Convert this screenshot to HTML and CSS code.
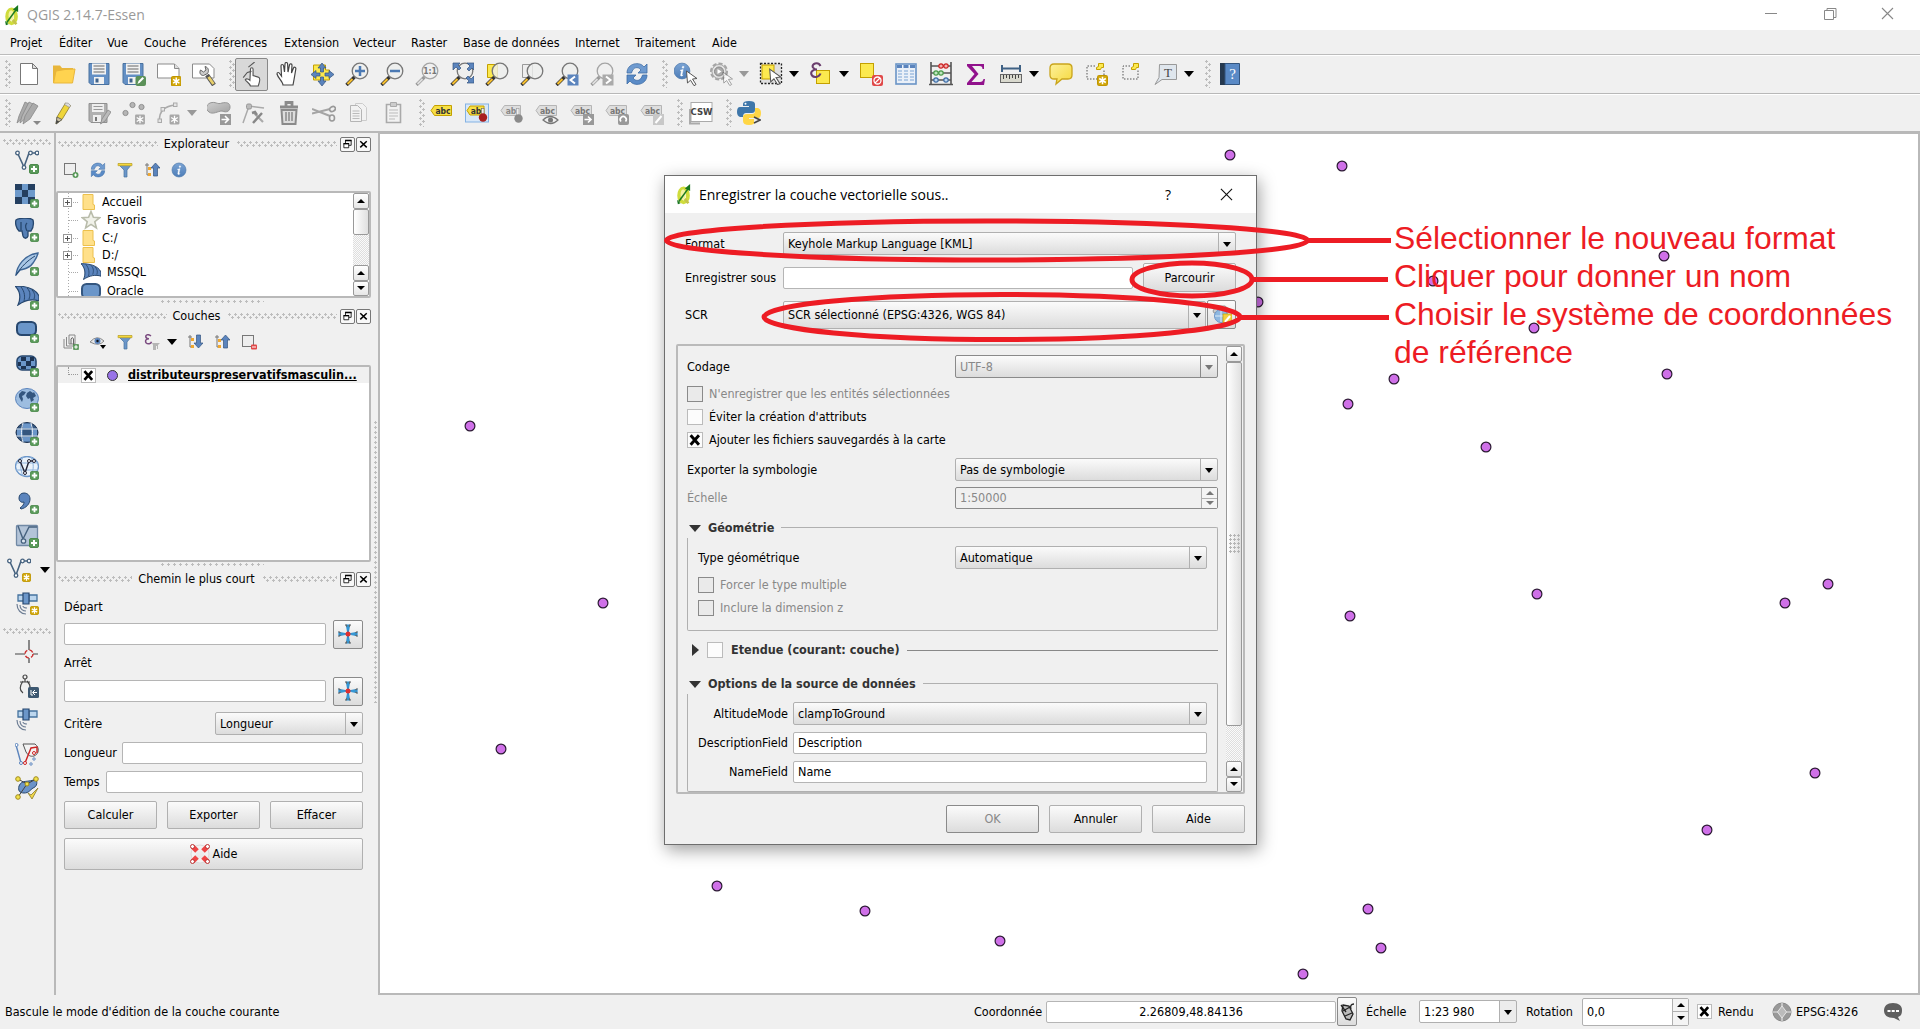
FILE: index.html
```html
<!DOCTYPE html>
<html lang="fr">
<head>
<meta charset="utf-8">
<title>QGIS 2.14.7-Essen</title>
<link rel="stylesheet" href="styles.css">
</head>
<body>
<svg class="defs" aria-hidden="true">
<defs>
<linearGradient id="gBlue" x1="0" y1="0" x2="0" y2="1"><stop offset="0" stop-color="#7ba4d4"/><stop offset="1" stop-color="#4d7db8"/></linearGradient>
<linearGradient id="gYel" x1="0" y1="0" x2="1" y2="1"><stop offset="0" stop-color="#fdf19a"/><stop offset="1" stop-color="#f5d83c"/></linearGradient>
<linearGradient id="gGrey" x1="0" y1="0" x2="1" y2="1"><stop offset="0" stop-color="#cfcfcf"/><stop offset="1" stop-color="#a2a2a2"/></linearGradient>
<symbol id="logo" viewBox="0 0 16 24"><ellipse cx="7.5" cy="13" rx="5" ry="8" fill="none" stroke="#cfdc3c" stroke-width="4.4"/><ellipse cx="7" cy="12" rx="3" ry="6" fill="#f3f2a0"/><path d="M9 17l4 5" stroke="#c5c44a" stroke-width="3"/><path d="M2 20L13 5" stroke="#1c7a22" stroke-width="1.8"/><path d="M9 5l6-5v8z" fill="#17761f"/><path d="M0 18l4 4-3 1z" fill="#17761f"/></symbol>
<symbol id="plus" viewBox="0 0 10 10"><rect x=".5" y=".5" width="9" height="9" rx="1.5" fill="#5a9a5a" stroke="#4c8a4c"/><path d="M5 2v6M2 5h6" stroke="#fff" stroke-width="2"/></symbol>
<symbol id="spark" viewBox="0 0 10 10"><rect x=".5" y=".5" width="9" height="9" rx="1.5" fill="#d3a80c" stroke="#c09600"/><path d="M5 1.5v7M2 3.2l6 3.6M8 3.2L2 6.8" stroke="#fff" stroke-width="1.4"/></symbol>
<symbol id="sparkG" viewBox="0 0 10 10"><rect x=".5" y=".5" width="9" height="9" rx="1" fill="#a8a8a8"/><path d="M5 1.5v7M2 3.2l6 3.6M8 3.2L2 6.8" stroke="#fff" stroke-width="1.2"/></symbol>
<symbol id="lens" viewBox="0 0 24 24"><path d="M1.500 23l8-8" stroke="#333" stroke-width="3.400"/><path d="M2.500 22l5-5" stroke="#f7bf2e" stroke-width="2.200"/><circle cx="15" cy="9" r="7.800" fill="#eeefee" fill-opacity=".8" stroke="#777" stroke-width="1.300"/></symbol>
<symbol id="lensG" viewBox="0 0 24 24"><path d="M1.500 23l8-8" stroke="#999" stroke-width="3.200"/><path d="M2.500 22l5-5" stroke="#ddd" stroke-width="1.800"/><circle cx="15" cy="9" r="7.800" fill="#f0f0f0" stroke="#a5a5a5" stroke-width="1.300"/></symbol>
<symbol id="cursor" viewBox="0 0 12 16"><path d="M1 1l10.500 7.500-4.500.5 3.500 5.500-2 1.200-3.500-5.500L2 13z" fill="#fff" stroke="#555" stroke-width="1"/></symbol>
<symbol id="new" viewBox="0 0 24 24"><path d="M3.500 1.500h12l5 5v16h-17z" fill="#fff" stroke="#777"/><path d="M15.500 1.500v5h5z" fill="#ddd" stroke="#777"/></symbol>
<symbol id="open" viewBox="0 0 24 24"><path d="M1 21V3.500h7l2 2.500h11v4z" fill="#e8b63b"/><path d="M1.500 21L4 9l9-1.500 10-.5-2.500 14z" fill="#ffd34f" stroke="#e8b63b"/></symbol>
<symbol id="save" viewBox="0 0 24 24"><path d="M2 1.500h20v21H4l-2-2z" fill="#6490c5" stroke="#4a729f"/><path d="M5 1.500h14v11H5z" fill="#f2f2f2"/><path d="M6.500 4h11M6.500 7h11M6.500 10h11" stroke="#666" stroke-width="1.200"/><path d="M7 15h10v7H7z" fill="#f2f2f2"/><path d="M8.500 16.500h3v4h-3z" fill="#3f638d"/></symbol>
<symbol id="saveG" viewBox="0 0 24 24"><path d="M2 2.500h18v19H4l-2-2z" fill="#b0b0b0" stroke="#909090"/><path d="M5 3h12v8H5z" fill="#eee"/><path d="M6.500 5.500h9M6.500 8.500h9" stroke="#999"/><path d="M6 14h8v7H6z" fill="#eee"/><path d="M8 16h2v4H8z" fill="#777"/><path d="M13.500 23l1.500-5 6-9 3 2-6 9z" fill="#bbb" stroke="#888" stroke-width=".8"/></symbol>
<symbol id="saveas" viewBox="0 0 24 24"><use href="#save" x="-1" y="0" width="24" height="24"/><rect x="13.500" y="14" width="10.500" height="10" rx="2" fill="#5b9158"/><path d="M15.500 22l1-3 4-4 1.500 1.500-4 4z" fill="#fff"/></symbol>
<symbol id="composer" viewBox="0 0 24 24"><path d="M.5 2h17l4.500 4.500v9.500H.5z" fill="#fff" stroke="#8b8b8b"/><path d="M17.500 2v4.500H22" fill="#ddd" stroke="#8b8b8b"/><use href="#spark" x="14" y="14" width="10.500" height="10.500"/></symbol>
<symbol id="manager" viewBox="0 0 24 24"><path d="M.5 2h17l4.500 4.500v9.500H.5z" fill="#fff" stroke="#8b8b8b"/><path d="M8.500 8l3 2 2.500-2-1-3.500c4 1 4 5 2.500 7l-4 2c-3 0-4.500-2.500-3-5.500z" fill="#ccc" stroke="#555" stroke-width=".9"/><path d="M15 13l7 10" stroke="#555" stroke-width="4.500"/><path d="M16.500 15l5 7" stroke="#e8cf6a" stroke-width="2.800"/></symbol>
<symbol id="touch" viewBox="0 0 24 24"><path d="M11 23c-1-3-4-4-5-6 1-1.500 3.500-.5 4.500.5L11 7c0-2 2.500-2 2.500 0v6l5 1.500c2 .5 1.500 3 1 5L18.500 23z" fill="#fff" stroke="#555" stroke-width="1.100"/><path d="M9 5l6-5M4 15l4-5 4-1" stroke="#555" fill="none" stroke-width="1"/></symbol>
<symbol id="hand" viewBox="0 0 24 24"><path d="M8 23c0-3-5-7-6-11 0-2 2-2 3 0l1.500 2L6 4c0-2 2.400-2 2.600 0L9.500 10 10 2c0-2 2.500-2 2.600 0l.4 8L14.500 3c.3-1.800 2.600-1.300 2.500.3L16.500 11l2-5c.6-1.500 2.700-.8 2.300 1C20 12 19 18 18 23z" fill="#fff" stroke="#444" stroke-width="1.200"/></symbol>
<symbol id="pan" viewBox="0 0 24 24"><path d="M3.500 3h12v5h4v10h-16z" fill="#fce94f" stroke="#c4a000"/><path d="M12 1l4 5h-2.500v4h-3V6H8zM12 24l4-5h-2.500v-4h-3v4H8zM1 12.500l5-4V11h4v3H6v2.500zM24 12.500l-5-4V11h-4v3h4v2.500z" fill="#5b84bd" stroke="#33557f" stroke-width=".7"/></symbol>
<symbol id="zin" viewBox="0 0 24 24"><use href="#lens"/><path d="M15 4v10M10 9h10" stroke="#4b79b3" stroke-width="2.500"/></symbol>
<symbol id="zout" viewBox="0 0 24 24"><use href="#lens"/><path d="M10 9h10" stroke="#4b79b3" stroke-width="2.500"/></symbol>
<symbol id="z11" viewBox="0 0 24 24"><use href="#lensG"/><text x="15" y="12.200" font-size="8.500" font-weight="bold" text-anchor="middle" fill="#777">1:1</text></symbol>
<symbol id="zfull" viewBox="0 0 24 24"><use href="#lens"/><path d="M3 1h7L8 3l3 3-2 2-3-3-3 3zM24 1v7l-2-2-3 3-2-2 3-3-3-3zM24 21h-7l2-2-3-3 2-2 3 3 3-3z" fill="#5b84bd" stroke="#33557f" stroke-width=".7"/></symbol>
<symbol id="zsel" viewBox="0 0 24 24"><path d="M2.500 2.500h10v13h-10z" fill="#fce94f" stroke="#c4a000"/><use href="#lens"/></symbol>
<symbol id="zlay" viewBox="0 0 24 24"><path d="M2.500 2.500h10v13h-10z" fill="#eee" stroke="#999"/><use href="#lens"/></symbol>
<symbol id="zlast" viewBox="0 0 24 24"><use href="#lens"/><rect x="12.500" y="12.500" width="11" height="11" fill="#5b84bd"/><path d="M20 14.500L15.500 18l4.500 3.500" stroke="#fff" stroke-width="2" fill="none"/></symbol>
<symbol id="znext" viewBox="0 0 24 24"><use href="#lensG"/><rect x="12.500" y="12.500" width="11" height="11" fill="#aaa"/><path d="M16 14.500l4.500 3.500-4.500 3.500" stroke="#fff" stroke-width="2" fill="none"/></symbol>
<symbol id="refresh" viewBox="0 0 24 24"><path d="M2 11C2 1 15-1 19 5l3-3v9h-9l3-3C13 4 8 5 6.500 11z" fill="#6f9bd0" stroke="#3d6ca5" stroke-width=".8"/><path d="M22 13c0 10-13 12-17 6l-3 3v-9h9l-3 3c3 4 8 3 9.500-3z" fill="#5a8bc7" stroke="#3d6ca5" stroke-width=".8"/></symbol>
<symbol id="info" viewBox="0 0 24 24"><circle cx="12" cy="12" r="10.500" fill="url(#gBlue)" stroke="#4a77ab"/><path d="M13 5.500l1.800.8-1 2-1.800-.8zM9.500 11l4-1-1.500 7c-.2 1 .5.800 1.500.2-.6 1.600-3.800 2.500-3.300 0l1-5.200z" fill="#fff" stroke="#fff" stroke-width=".6"/></symbol>
<symbol id="identify" viewBox="0 0 24 24"><use href="#info" x="-1" y="0" width="18" height="18"/><use href="#cursor" x="11" y="8" width="13" height="16"/></symbol>
<symbol id="action" viewBox="0 0 24 24"><circle cx="10" cy="9.500" r="7.800" fill="#ddd" stroke="#a5a5a5" stroke-width="2.500" stroke-dasharray="4 2"/><circle cx="10" cy="9.500" r="7" fill="#e4e4e4" stroke="#aaa"/><circle cx="10" cy="9.500" r="4.500" fill="#aaa" stroke="#888"/><path d="M8.500 7v5l4-2.500z" fill="#fff"/><use href="#cursor" x="13" y="9" width="11" height="15" opacity=".55"/></symbol>
<symbol id="select" viewBox="0 0 24 24"><rect x="1.500" y="1.500" width="21" height="20" fill="#e0e0e0" stroke="#222" stroke-width="1.300" stroke-dasharray="2 1.500"/><rect x="3" y="3" width="12" height="14" fill="#fce94f" stroke="#c4a000"/><use href="#cursor" x="9" y="6" width="14" height="17"/></symbol>
<symbol id="eps" viewBox="0 0 24 24"><rect x="7.500" y="8.500" width="13" height="13" fill="#fce94f" stroke="#c4a000"/><path d="M11.500 4C9-1 2 2 4 5.500c1 1.500 3 2 4 2-5 0-7 3-5 6 2 2.500 7 2 8.500-2" fill="none" stroke="#6a3d6d" stroke-width="2.100"/></symbol>
<symbol id="desel" viewBox="0 0 24 24"><rect x="1.500" y="1.500" width="13" height="14" fill="#fce94f" stroke="#c4a000"/><rect x="13" y="13" width="11" height="11" rx="2" fill="#e04848"/><circle cx="18.500" cy="18.500" r="3.500" fill="#e04848" stroke="#fff" stroke-width="1.300"/><path d="M16 21l5-5" stroke="#fff" stroke-width="1.300"/></symbol>
<symbol id="table" viewBox="0 0 24 24"><rect x="2" y="2" width="20" height="20" fill="#eaf0f8" stroke="#6a94c6" stroke-width="1.600"/><path d="M3 4.500h18" stroke="#5b84bd" stroke-width="3" stroke-dasharray="5 1.500"/><path d="M4 9h4m2 0h4m2 0h4M4 12h4m2 0h4m2 0h4M4 15h4m2 0h4m2 0h4M4 18h4m2 0h4m2 0h4" stroke="#7ba4d4"/></symbol>
<symbol id="abacus" viewBox="0 0 24 24"><path d="M2 0v22M22 0v22M2 4h20M2 11h20M2 18h20M0 22.500h24" stroke="#555" stroke-width="1.600"/><g stroke-width="1.200"><circle cx="12" cy="4" r="2.200" fill="#f3b0b0" stroke="#c22"/><circle cx="17" cy="4" r="2.200" fill="#f3b0b0" stroke="#c22"/><circle cx="7" cy="11" r="2.200" fill="#bfe6bf" stroke="#4a9a4a"/><circle cx="12" cy="11" r="2.200" fill="#bfe6bf" stroke="#4a9a4a"/><circle cx="7" cy="18" r="2.200" fill="#bcd6f0" stroke="#3d6ca5"/><circle cx="17" cy="18" r="2.200" fill="#bcd6f0" stroke="#3d6ca5"/></g></symbol>
<symbol id="sigma" viewBox="0 0 24 24"><path d="M3 2h17v5h-1.500c0-2-1-3-3-3H8l6.500 8L7.500 20H16c2 0 3-1 3.500-3H21l-1 6H3v-2l7.500-9L3 4z" fill="#91128c"/></symbol>
<symbol id="measure" viewBox="0 0 24 24"><path d="M3 3v7M21 3v7M3 6.500h18" stroke="#3f6184" stroke-width="2"/><rect x="1.500" y="12.500" width="21" height="8" fill="#d9d9ce" stroke="#666"/><path d="M4.500 13v4m3-4v3m3-3v4m3-4v3m3-3v4m3-4v3" stroke="#444"/></symbol>
<symbol id="tip" viewBox="0 0 24 24"><path d="M5 2h14q4 0 4 4v7q0 4-4 4h-6l-6 5 1-5H5q-4 0-4-4V6q0-4 4-4z" fill="url(#gYel)" stroke="#c9a41c" stroke-width="1.300"/></symbol>
<symbol id="bmnew" viewBox="0 0 24 24"><path d="M11 4H3v13h17V8" fill="none" stroke="#555" stroke-dasharray="1.500 1.500"/><path d="M14.500 1.500h5v4h-2l-1 2h-4v-2l2-1z" fill="#fce94f" stroke="#c4a000"/><use href="#spark" x="13" y="13" width="11" height="11"/></symbol>
<symbol id="bm" viewBox="0 0 24 24"><path d="M11 4H4v13h15V8" fill="none" stroke="#555" stroke-dasharray="1.500 1.500"/><path d="M14.500 1.500h5v4h-2l-1 2h-4v-2l2-1z" fill="#fce94f" stroke="#c4a000"/></symbol>
<symbol id="annot" viewBox="0 0 24 24"><path d="M5.500 2.500h17v15H8l-7 5 4-7z" fill="#dfe6ed" stroke="#999"/><text x="14" y="14.500" font-size="13" text-anchor="middle" class="ser" fill="#444">T</text></symbol>
<symbol id="help" viewBox="0 0 24 24"><path d="M2 1h5v22H2z" fill="#26394f"/><path d="M7 1.500h14.500v21H7z" fill="#5a8ac6" stroke="#33557f"/><text x="14.500" y="17" font-size="15" text-anchor="middle" class="ser" fill="#fff">?</text></symbol>
<symbol id="pencils" viewBox="0 0 24 24"><path d="M1 22l2-7L9 1l4 2-6 14z" fill="#aaa" stroke="#888" stroke-width=".8"/><path d="M4 22l2-7L13 1l4 2-7 14z" fill="#b5b5b5" stroke="#888" stroke-width=".8"/><path d="M7 23l2-8L17 2l5 3-8 13z" fill="#aaa" stroke="#888" stroke-width=".8"/></symbol>
<symbol id="pencil" viewBox="0 0 24 24"><path d="M4 23l1-7L13.500 2l5 2.500-8.500 14z" fill="#efd53a" stroke="#8a7a2a" stroke-width=".8"/><path d="M13.500 2q3-1 5 2.500l-1 2-5-3z" fill="#ddd" stroke="#888" stroke-width=".6"/><path d="M4 23l1-7 5 2.500z" fill="#c9c0a5" stroke="#555" stroke-width=".8"/><path d="M4 23l.5-4 2.800 1.500z" fill="#444"/></symbol>
<symbol id="addpt" viewBox="0 0 24 24"><g fill="#b5b5b5" stroke="#909090"><circle cx="10.500" cy="4" r="2.600"/><circle cx="3.500" cy="12" r="2.600"/><circle cx="19.500" cy="6" r="2.600"/></g><use href="#sparkG" x="12" y="13" width="12" height="11"/></symbol>
<symbol id="curve" viewBox="0 0 24 24"><path d="M2.500 20C2 12 5 5 19 4" fill="none" stroke="#aaa" stroke-width="1.600"/><g fill="#e5e5e5" stroke="#aaa"><rect x="1" y="18" width="3.500" height="3.500"/><rect x="4" y="6.500" width="3.500" height="3.500"/><rect x="16.500" y="2" width="3.500" height="3.500"/></g><use href="#sparkG" x="12" y="13" width="11" height="11"/></symbol>
<symbol id="movef" viewBox="0 0 24 24"><path d="M3 2c6-2 7 2 12 0 5-1 8 0 8 4s-3 6-8 4c-4 0-9 4-13 1S-1 4 3 2z" fill="url(#gGrey)" stroke="#949494"/><rect x="13" y="13" width="11" height="11" fill="#999"/><path d="M14.500 18.500h6M18 15l3.500 3.500L18 22" stroke="#fff" stroke-width="1.600" fill="none"/></symbol>
<symbol id="node" viewBox="0 0 24 24"><path d="M1 22L7 5l15 2" stroke="#aaa" fill="none" stroke-width="1.500"/><rect x="4.500" y="3" width="5" height="5" rx="1.500" fill="#bbb" stroke="#999"/><path d="M12 12l9 9" stroke="#aaa" stroke-width="2.200"/><path d="M20 12l-9 10M10 12l3-1 2 3" stroke="#888" stroke-width="2.400" fill="none"/></symbol>
<symbol id="trash" viewBox="0 0 24 24"><path d="M3 6h18M9 4.500V1.500h6v3" stroke="#8b8b8b" stroke-width="2.800" fill="none"/><path d="M4.500 9h15l-1 14h-13z" fill="#ddd" stroke="#8b8b8b" stroke-width="2"/><path d="M9 11v9M12 11v9M15 11v9" stroke="#8b8b8b" stroke-width="1.500"/></symbol>
<symbol id="cut" viewBox="0 0 24 24"><path d="M0 8l18 7M0 12.500L18 8" stroke="#a5a5a5" stroke-width="2"/><g fill="none" stroke="#999" stroke-width="1.600"><ellipse cx="20.500" cy="8" rx="3" ry="2.300" transform="rotate(-30 20.500 8)"/><ellipse cx="20" cy="17" rx="2.500" ry="3"/></g></symbol>
<symbol id="copy" viewBox="0 0 24 24"><path d="M8.500 2.500h7l4 4v13h-11z" fill="#f2f2f2" stroke="#ccc"/><path d="M3.500 4.500h7l4 4v12h-11z" fill="#f2f2f2" stroke="#b5b5b5"/><path d="M5.500 10h7M5.500 12.500h7M5.500 15h7M5.500 17.500h7" stroke="#bbb"/></symbol>
<symbol id="paste" viewBox="0 0 24 24"><path d="M4.500 3.500h14v18h-14z" fill="#f2f2f2" stroke="#aaa" stroke-width="1.600"/><path d="M8.500 1.500h6v4h-6z" fill="#ccc" stroke="#aaa"/><path d="M7 9h9M7 12h9M7 15h9M7 18h6" stroke="#bbb"/></symbol>
<symbol id="abc" viewBox="0 0 24 24"><path d="M1 9.500L4.500 4.500h17v10h-17z" fill="#f7df45" stroke="#c4a000"/><text x="13" y="12.700" font-size="8.500" font-weight="bold" text-anchor="middle" fill="#333">abc</text></symbol>
<symbol id="abcG" viewBox="0 0 24 24"><path d="M1 9.500L4.500 4.500h17v10h-17z" fill="#dedede" stroke="#b5b5b5"/><text x="12.500" y="12.700" font-size="8.500" font-weight="bold" text-anchor="middle" fill="#777">abc</text></symbol>
<symbol id="abcpin" viewBox="0 0 24 24"><rect x=".5" y="3" width="23" height="18" fill="#d9e8f8" stroke="#83b2e4"/><path d="M2 9.500L5 5h14v9H5z" fill="#f7df45" stroke="#c4a000"/><text x="11" y="12.500" font-size="8.500" font-weight="bold" text-anchor="middle" fill="#333">ab</text><rect x="16.500" y="7.500" width="2.500" height="7" fill="#eee" stroke="#666" stroke-width=".6"/><circle cx="18" cy="16.500" r="4.200" fill="#a82020"/></symbol>
<symbol id="abc1" viewBox="0 0 24 24"><path d="M1 9.500L4.500 4.500h16v10h-16z" fill="#dedede" stroke="#b5b5b5"/><text x="11" y="12.700" font-size="8.500" font-weight="bold" text-anchor="middle" fill="#888">ab</text><rect x="16.500" y="7.500" width="2.500" height="7" fill="#eee" stroke="#999" stroke-width=".6"/><circle cx="18.500" cy="17.500" r="4.200" fill="#8a8a8a"/></symbol>
<symbol id="abc2" viewBox="0 0 24 24"><use href="#abcG"/><path d="M8 19q7-7 15 0-7 7-15 0z" fill="#eee" stroke="#777" stroke-width="1.200"/><circle cx="15.500" cy="19" r="2.500" fill="#777"/></symbol>
<symbol id="abc3" viewBox="0 0 24 24"><use href="#abcG"/><rect x="13" y="13" width="11" height="11" fill="#999"/><path d="M14.500 18.500h6M18 15.500l3 3-3 3" stroke="#fff" stroke-width="1.600" fill="none"/></symbol>
<symbol id="abc4" viewBox="0 0 24 24"><use href="#abcG"/><rect x="13" y="13" width="11" height="11" rx="2" fill="#999"/><path d="M16 20.500a3 3 0 1 1 4.500 0" stroke="#fff" stroke-width="1.600" fill="none"/></symbol>
<symbol id="abc5" viewBox="0 0 24 24"><use href="#abcG"/><rect x="13" y="13" width="11" height="11" fill="#c8c8c8"/><path d="M15.500 22l6-7" stroke="#fff" stroke-width="2"/></symbol>
<symbol id="csw" viewBox="0 0 24 24"><path d="M1 8v14.500h10" fill="none" stroke="#aaa" stroke-width="2"/><rect x="2" y="1.500" width="21" height="19" fill="#fff" stroke="#aaa"/><text x="12.500" y="13.500" font-size="9.500" font-weight="bold" text-anchor="middle" fill="#444">CSW</text></symbol>
<symbol id="python" viewBox="0 0 24 24"><path d="M6 3q0-3 6-3t6 3v6q0 3-3 3H9q-3 0-3 4H3q-3-1-3-5 0-5 3-5h9V5H6z" fill="#3f77aa"/><path d="M18 7h3q3 1 3 5 0 5-3 5h-9v1h6v2q0 4-6 4t-6-4v-4q0-3 4-3h5q3 0 3-3z" fill="#ffd645"/><circle cx="8.500" cy="2.700" r="1" fill="#fff"/><path d="M17 16l6 3-6 3" stroke="#444" stroke-width="1.600" fill="#eee"/></symbol>
<symbol id="vec" viewBox="0 0 24 24"><path d="M2.500 3L9 17l5-14h7" fill="none" stroke="#46627f" stroke-width="1.600"/><g fill="#fff" stroke="#46627f" stroke-width="1.300"><circle cx="2.500" cy="3" r="1.800"/><circle cx="9" cy="17.500" r="1.800"/><circle cx="15.500" cy="3" r="1.800"/><circle cx="22" cy="3" r="1.800"/></g></symbol>
<symbol id="l1" viewBox="0 0 24 24"><use href="#vec"/><use href="#plus" x="14" y="14" width="10" height="10"/></symbol>
<symbol id="l2" viewBox="0 0 24 24"><path d="M0 0h20v20H0z" fill="#6e9acb"/><path d="M0 0h7v6H0zM13 0h7v6h-7zM7 6h6v7H7zM0 13h7v7H0zM13 13h7v7h-7z" fill="#243f60"/><use href="#plus" x="15" y="15" width="9" height="9"/></symbol>
<symbol id="l3" viewBox="0 0 24 24"><path d="M1 2c3-2 14-3 17 0 1 4 0 8-2 11h-3v5c-1 3-4 3-5 0l-1-5H4C1 10 0 5 1 2z" fill="#557fb5" stroke="#27476e" stroke-width="1.300"/><path d="M6 4v8M12 5c-3 3-1 5 0 8" stroke="#27476e" fill="none" stroke-width="1.300"/><use href="#plus" x="15" y="15" width="9" height="9"/></symbol>
<symbol id="l4" viewBox="0 0 24 24"><path d="M1 23C2 14 9 3 23 1c-1 5-3 7-5 10-4 6-10 6-13 7z" fill="#a9c7e6" stroke="#3f6797" stroke-width="1.400"/><path d="M1 23C7 14 12 9 20 4" stroke="#27476e" fill="none"/><use href="#plus" x="15" y="15" width="9" height="9"/></symbol>
<symbol id="sail" viewBox="0 0 24 20"><path d="M0 0c10 0 20 2 24 10l0 5c-6-2-14-1-21 4C6 12 5 5 0 0z" fill="#5b84bd" stroke="#27476e" stroke-width="1.200"/><path d="M6 1c4 5 4 10 3 14M12 2c4 4 3 8 2 11M17 4c3 3 3 6 2 9" stroke="#27476e" fill="none"/></symbol>
<symbol id="l5" viewBox="0 0 24 24"><use href="#sail" width="24" height="20"/><use href="#plus" x="15" y="15" width="9" height="9"/></symbol>
<symbol id="l6" viewBox="0 0 24 24"><rect x="2" y="2" width="19" height="13" rx="4.500" fill="#6b96c9" stroke="#27476e" stroke-width="2"/><use href="#plus" x="15" y="14" width="9" height="9"/></symbol>
<symbol id="l7" viewBox="0 0 24 24"><rect x="2" y="2" width="19" height="14" rx="5" fill="#6b96c9" stroke="#27476e" stroke-width="1.600"/><path d="M6 3h5v4H6zM15 3h4v4h-4zM11 7h5v5h-5zM3 8h3v4H3zM6 12h5v3H6zM16 12h4v3h-4z" fill="#1d3352"/><use href="#plus" x="15" y="14" width="9" height="9"/></symbol>
<symbol id="l8" viewBox="0 0 24 24"><ellipse cx="12" cy="10.500" rx="11.500" ry="10" fill="#9dbde0" stroke="#5b84bd"/><path d="M4 6l3-3 4 1-2 3-2 1 1 3-1 3-3-5zM12 5l3-2 3 2 1-1 2 4-3 2 1 2-3 2-1-4-2 1-2-3z" fill="#34567f"/><use href="#plus" x="15" y="15" width="9" height="9"/></symbol>
<symbol id="l9" viewBox="0 0 24 24"><ellipse cx="12" cy="10.500" rx="11" ry="10" fill="#34567f" stroke="#1d3352"/><path d="M8 1.500h8v5H8zM2 7.500h5.500v6H2zM16.500 7.500H22v6h-5.500zM8 14.500h8v5H8z" fill="#6b96c9"/><path d="M1 7h22M1 14h22M8 1c-2 7-2 12 0 19M16 1c2 7 2 12 0 19" stroke="#e5eef8" fill="none"/><use href="#plus" x="15" y="15" width="9" height="9"/></symbol>
<symbol id="l10" viewBox="0 0 24 24"><ellipse cx="12" cy="10.500" rx="11.500" ry="10" fill="#eaf2fa" stroke="#6b96c9" stroke-width="1.300"/><path d="M1 7h22M1 14h22M8 1c-3 7-3 12 0 19M16 1c3 7 3 12 0 19" stroke="#8fb3dc" fill="none"/><path d="M5 5l5 12 4-12h5" fill="none" stroke="#223" stroke-width="1.400"/><g fill="#fff" stroke="#223"><circle cx="5" cy="5" r="1.500"/><circle cx="10" cy="17" r="1.500"/><circle cx="14" cy="5" r="1.500"/><circle cx="19" cy="5" r="1.500"/></g><use href="#plus" x="15" y="15" width="9" height="9"/></symbol>
<symbol id="l11" viewBox="0 0 24 24"><path d="M5 18c3-2 4-4 4-6-3 1-5-1-5-4s2-5 5-5 6 2 6 6c0 5-4 9-9 10z" fill="#5b84bd" stroke="#27476e"/><use href="#plus" x="15" y="15" width="9" height="9"/></symbol>
<symbol id="l12" viewBox="0 0 24 24"><rect x="1.500" y="1.500" width="21" height="20" rx="1" fill="#b3c4d8" stroke="#7189a5" stroke-width="1.300"/><path d="M3 2l5 13 6-12h8" fill="none" stroke="#46627f" stroke-width="1.400"/><circle cx="8.500" cy="17" r="2.200" fill="#dde6f0" stroke="#46627f" stroke-width="1.300"/><use href="#plus" x="14" y="14" width="10" height="10"/></symbol>
<symbol id="l13" viewBox="0 0 24 24"><use href="#vec"/><use href="#spark" x="15" y="15" width="9" height="9"/></symbol>
<symbol id="sat" viewBox="0 0 24 24"><path d="M3 3h6v6H3zM14 3h8v6h-8z" fill="#bcd6ee" stroke="#46739f" stroke-width="1.300"/><path d="M8 1h6v11H8z" fill="#6b96c9" stroke="#27476e" stroke-width="1.200"/><path d="M8 14c0 1 2 2 4 2M5 13c0 4 3 6 6 6M2 12c0 6 4 10 9 10" fill="none" stroke="#6f7f95" stroke-width="1.200"/></symbol>
<symbol id="l14" viewBox="0 0 24 24"><use href="#sat"/><use href="#spark" x="15" y="14" width="9" height="9"/></symbol>
<symbol id="l15" viewBox="0 0 24 24"><path d="M0 14h10M18 14h5M14 0v10M14 18v5" stroke="#444" stroke-width="1.200"/><circle cx="14" cy="14" r="4" fill="none" stroke="#c33" stroke-width="1.500" stroke-dasharray="4 2.300"/></symbol>
<symbol id="l16" viewBox="0 0 24 24"><circle cx="10" cy="3" r="2" fill="none" stroke="#444" stroke-width="1.200"/><path d="M10 5v3M5 8h10M8 7c-4 6-3 10 0 12M12 7c4 4 3 6 3 8" fill="none" stroke="#444" stroke-width="1.200"/><rect x="13" y="13" width="11" height="11" rx="1.500" fill="#3d5871"/><path d="M16 16v5h2m4-2.500h-4M20 16l-2.500 2.500L20 21" stroke="#fff" fill="none"/></symbol>
<symbol id="l18" viewBox="0 0 24 24"><path d="M1 3l5 18" stroke="#5b84bd" stroke-width="1.400"/><path d="M8 2h12c5 4 4 10-1 12-4 1-6-1-8-4z" fill="#f3f3f3" stroke="#555"/><path d="M10 21l6-15 6-1v6" stroke="#c22" stroke-width="1.400" fill="none"/><g fill="#fff"><circle cx="1.500" cy="3" r="1.500" stroke="#5b84bd"/><circle cx="6" cy="21" r="1.500" stroke="#5b84bd"/><circle cx="10" cy="21" r="1.500" stroke="#c22"/><circle cx="19" cy="11" r="1.500" stroke="#c22"/><circle cx="19" cy="17" r="1.200" stroke="#5b84bd"/><circle cx="16" cy="22" r="1.200" stroke="#5b84bd"/></g></symbol>
<symbol id="l19" viewBox="0 0 24 24"><path d="M4 10c3-7 9-3 17-7 2 5 0 8-3 9-3 2-4 5-9 5S3 14 4 10z" fill="#6b93c8" stroke="#27476e"/><path d="M3 3l9 5 9-5M12 8l-9 13" stroke="#444" fill="none"/><g fill="#f2e14c" stroke="#a08a1c"><circle cx="3" cy="3" r="2.300"/><circle cx="21" cy="3" r="2.300"/><circle cx="12" cy="8" r="2"/><circle cx="3" cy="21" r="2.300"/></g><path d="M13 17l3 2 7-7-6 11z" fill="#f2d94c" stroke="#8a7a2a" stroke-width=".8"/></symbol>
<symbol id="dadd" viewBox="0 0 16 16"><rect x="1.500" y="1.500" width="11" height="11" fill="#eee" stroke="#777"/><circle cx="12.500" cy="13" r="3" fill="#5a9a5a"/><path d="M12.500 11.500v3M11 13h3" stroke="#fff"/></symbol>
<symbol id="drem" viewBox="0 0 16 16"><rect x="1.500" y="1.500" width="11" height="11" fill="#eee" stroke="#777"/><rect x="10" y="10.500" width="6" height="5" rx="1" fill="#e04848"/><path d="M11 13h4" stroke="#fff"/></symbol>
<symbol id="filter" viewBox="0 0 16 16"><path d="M1 2h14L10 8v7H7V8z" fill="#6b96c9" stroke="#46739f" stroke-width=".7"/><path d="M1 1.500h14v2.200H1z" fill="#f5d83c" stroke="#b89a1a" stroke-width=".6"/></symbol>
<symbol id="coll" viewBox="0 0 16 16"><path d="M3 1v12h3M1 3h4" stroke="#777" fill="none"/><path d="M4 5h3v3H4zM4 11h3v3H4z" fill="#f0a830"/><path d="M11.500 1l4.500 5h-2.500v8h-4V6H7z" fill="#5b84bd" stroke="#33557f" stroke-width=".7"/></symbol>
<symbol id="expd" viewBox="0 0 16 16"><path d="M3 1v12h3M1 3h4" stroke="#777" fill="none"/><path d="M4 4h3v3H4zM4 11h3v3H4z" fill="#f0a830"/><path d="M11.500 14L16 9h-2.500V1h-4v8H7z" fill="#5b84bd" stroke="#33557f" stroke-width=".7"/></symbol>
<symbol id="group" viewBox="0 0 16 16"><path d="M1 5v9h8M3.500 3v9h9M6 1h6v9H6z" fill="none" stroke="#888"/><path d="M8 10V5q1.500-3 2.500 0v6" stroke="#666" fill="none"/><use href="#plus" x="10" y="10" width="6" height="6"/></symbol>
<symbol id="eye" viewBox="0 0 16 16"><path d="M0 8q7-8 14-1-5 6-14 1z" fill="#e6e6e6" stroke="#888"/><circle cx="7.500" cy="7" r="3" fill="#5b84bd"/><circle cx="7.500" cy="7" r="1.200" fill="#111"/><path d="M10 11h6l-3 4z" fill="#000"/></symbol>
<symbol id="epsf" viewBox="0 0 16 16"><path d="M7 2C4-.5 1 1 2 3.500c.6 1 2 1.200 3 1.200-3 0-4 2-3 4 2 2 5 1 5.500-1" fill="none" stroke="#7b4b80" stroke-width="1.500"/><path d="M8 9h8l-2 2v4h-1v-3h-1v4H9v-5z" fill="#b5b5b5"/></symbol>
<symbol id="folder" viewBox="0 0 14 16"><path d="M1 .5h10v10l1.500.5v4.500H1z" fill="#ffe08a" stroke="#ecc04c"/></symbol>
<symbol id="star" viewBox="0 0 20 20"><path d="M10 1.500l2.400 5.800 6.300.4-4.900 4 1.600 6.200-5.400-3.500-5.400 3.500 1.600-6.200-4.900-4 6.300-.4z" fill="#f1f2ea" stroke="#b9bcab" stroke-width="1.600"/></symbol>
<symbol id="route" viewBox="0 0 20 20"><path d="M10 10L8.500 1h3zM10 10l-1.500 9h3zM10 10L1 8.500v3zM10 10l9-1.500v3z" fill="#3aa0dc" stroke="#2c8fd0" stroke-width="1.200"/><path d="M7.500.5L9 2.500M12.500.5L11 2.500M7.500 19.500L9 17.500M12.500 19.500L11 17.500M.5 7.500l2 1.500M.5 12.500l2-1.500M19.500 7.500l-2 1.500M19.500 12.500l-2-1.500" stroke="#666" stroke-width="1.300"/><circle cx="10" cy="10" r="2.500" fill="#e03030"/></symbol>
<symbol id="buoy" viewBox="0 0 20 20"><circle cx="10" cy="10" r="6.500" fill="none" stroke="#f2f2f2" stroke-width="5"/><circle cx="10" cy="10" r="9" fill="none" stroke="#d5d5d5" stroke-width=".8"/><path d="M2.500 2.500l4.500 4.500M17.500 2.500L13 7M2.500 17.500L7 13M17.500 17.500L13 13" stroke="#ee4545" stroke-width="5"/><g fill="#fff" stroke="#b33"><circle cx="2.500" cy="2.500" r="2"/><circle cx="17.500" cy="2.500" r="2"/><circle cx="2.500" cy="17.500" r="2"/><circle cx="17.500" cy="17.500" r="2"/></g></symbol>
<symbol id="crs" viewBox="0 0 20 20"><path d="M1 6l3-5h9l5 4-2 3H2z" fill="#ccc" stroke="#999"/><circle cx="9" cy="11" r="6.500" fill="#8fb8e0" stroke="#6b96c9"/><path d="M3 11h12M9 5v12" stroke="#dcebf8"/><rect x="11" y="9" width="9" height="9" fill="#f3cf3e" stroke="#c4a000" stroke-width=".7"/><path d="M13 17l5-6" stroke="#fff" stroke-width="2"/></symbol>
<symbol id="globe" viewBox="0 0 20 20"><circle cx="10" cy="10" r="9" fill="#999" stroke="#888"/><path d="M1 10h18M10 1v18" stroke="#e5e5e5" fill="none" stroke-width="1.200"/><path d="M10 4l4.500 6-4.500 6-4.500-6z" fill="#bbb" stroke="#e5e5e5"/></symbol>
<symbol id="bubble" viewBox="0 0 20 20"><path d="M10 1c6 0 9 3 9 7s-1 6-4 7l2 4-6-3C4 16 1 13 1 8.500S4 1 10 1z" fill="#5f5f5f"/><path d="M4.500 8h3v2h-3zM8.700 8h3v2h-3zM13 8h3v2h-3z" fill="#fff"/></symbol>
<symbol id="mouse" viewBox="0 0 16 20"><path d="M4 3l6 1 4 8-3 6-4-1-4-8z" fill="#bbb" stroke="#222" stroke-width="1.300"/><path d="M4 9l7-4M2 3l5 7M6 14l7-3M15 2c-3 0-4 2-3 5" stroke="#222" fill="none" stroke-width="1.300"/></symbol>
<symbol id="float" viewBox="0 0 16 16"><path d="M5.500 3h7v6h-7z" fill="none" stroke="#000"/><path d="M5 3h8" stroke="#000" stroke-width="2"/><path d="M3.500 7h6v5h-6z" fill="#fff" stroke="#000"/><path d="M3 7h7" stroke="#000" stroke-width="1.600"/></symbol>
<symbol id="xs" viewBox="0 0 16 16"><path d="M4 4l8 7.500M12 4l-8 7.500" stroke="#000" stroke-width="1.800"/></symbol>
<symbol id="chk" viewBox="0 0 16 16"><path d="M3 2.500l9.500 11M12.500 2.500l-9.500 11" stroke="#000" stroke-width="3.300"/></symbol>
</defs>
</svg>

<header class="titlebar">
  <svg class="logo"><use href="#logo"/></svg>
  <span class="apptitle">QGIS 2.14.7-Essen</span>
  <svg class="winbtns" viewBox="0 0 150 30"><path d="M15 13.500h12" stroke="#888"/><path d="M74.500 10.500h9v9h-9zM77 10.500v-2h9v9h-2.500" fill="none" stroke="#888"/><path d="M132 8l11 11M143 8l-11 11" stroke="#888" stroke-width="1.100"/></svg>
</header>
<nav class="menubar">
  <span style="width:49px">Projet</span><span style="width:48px">Éditer</span><span style="width:37px">Vue</span><span style="width:57px">Couche</span><span style="width:83px">Préférences</span><span style="width:69px">Extension</span><span style="width:58px">Vecteur</span><span style="width:52px">Raster</span><span style="width:112px">Base de données</span><span style="width:60px">Internet</span><span style="width:77px">Traitement</span><span>Aide</span>
</nav>

<div class="toolbar">
  <i class="grip"></i>
  <svg><use href="#new"/></svg><svg><use href="#open"/></svg><svg><use href="#save"/></svg><svg><use href="#saveas"/></svg><svg><use href="#composer"/></svg><svg><use href="#manager"/></svg>
  <i class="grip g2"></i>
  <svg class="pressed"><use href="#touch"/></svg><svg><use href="#hand"/></svg><svg><use href="#pan"/></svg><svg><use href="#zin"/></svg><svg><use href="#zout"/></svg><svg><use href="#z11"/></svg><svg><use href="#zfull"/></svg><svg><use href="#zsel"/></svg><svg><use href="#zlay"/></svg><svg><use href="#zlast"/></svg><svg><use href="#znext"/></svg><svg><use href="#refresh"/></svg>
  <i class="grip g3"></i>
  <svg><use href="#identify"/></svg><svg><use href="#action"/></svg><b class="arrow dim"></b><svg><use href="#select"/></svg><b class="arrow"></b><svg><use href="#eps"/></svg><b class="arrow"></b><svg><use href="#desel"/></svg><svg><use href="#table"/></svg><svg><use href="#abacus"/></svg><svg><use href="#sigma"/></svg><svg><use href="#measure"/></svg><b class="arrow"></b><svg><use href="#tip"/></svg><svg><use href="#bmnew"/></svg><svg><use href="#bm"/></svg><svg><use href="#annot"/></svg><b class="arrow"></b>
  <i class="grip g4"></i>
  <svg><use href="#help"/></svg>
</div>
<div class="toolbar second">
  <i class="grip"></i>
  <svg class="wide" viewBox="0 0 29 24"><use href="#pencils" width="24" height="24"/><path d="M17 20h8l-4 4z" fill="#888"/></svg><svg><use href="#pencil"/></svg><svg><use href="#saveG"/></svg><svg><use href="#addpt"/></svg><svg><use href="#curve"/></svg><b class="arrow dim"></b><svg><use href="#movef"/></svg><svg><use href="#node"/></svg><svg><use href="#trash"/></svg><svg><use href="#cut"/></svg><svg><use href="#copy"/></svg><svg><use href="#paste"/></svg>
  <i class="grip g2"></i>
  <svg><use href="#abc"/></svg><svg><use href="#abcpin"/></svg><svg><use href="#abc1"/></svg><svg><use href="#abc2"/></svg><svg><use href="#abc3"/></svg><svg><use href="#abc4"/></svg><svg><use href="#abc5"/></svg>
  <i class="grip g5"></i>
  <svg><use href="#csw"/></svg>
  <i class="grip g2"></i>
  <svg><use href="#python"/></svg>
</div>

<main class="workspace">
  <aside class="sidebar">
    <i class="hgrip"></i>
    <svg><use href="#l1"/></svg><svg><use href="#l2"/></svg><svg><use href="#l3"/></svg><svg><use href="#l4"/></svg><svg><use href="#l5"/></svg><svg><use href="#l6"/></svg><svg><use href="#l7"/></svg><svg><use href="#l8"/></svg><svg><use href="#l9"/></svg><svg><use href="#l10"/></svg><svg><use href="#l11"/></svg><svg><use href="#l12"/></svg>
    <div class="witharrow"><svg><use href="#l13"/></svg><b class="arrow"></b></div>
    <svg><use href="#l14"/></svg>
    <i class="hgrip low"></i>
    <svg><use href="#l15"/></svg><svg><use href="#l16"/></svg><svg><use href="#sat"/></svg><svg><use href="#l18"/></svg><svg><use href="#l19"/></svg>
  </aside>

  <section class="docks">
    <div class="docktitle"><i class="hdots"></i><span>Explorateur</span><i class="hdots"></i><svg class="db"><use href="#float"/></svg><svg class="db"><use href="#xs"/></svg></div>
    <div class="docktools"><svg><use href="#dadd"/></svg><svg><use href="#refresh"/></svg><svg><use href="#filter"/></svg><svg><use href="#coll"/></svg><svg><use href="#info"/></svg></div>
    <div class="tree">
      <div class="rows">
        <div class="row"><i class="pm"></i><svg class="fo"><use href="#folder"/></svg>Accueil</div>
        <div class="row"><i class="br"></i><svg class="big"><use href="#star"/></svg>Favoris</div>
        <div class="row"><i class="pm"></i><svg class="fo"><use href="#folder"/></svg>C:/</div>
        <div class="row short"><i class="pm"></i><svg class="fo"><use href="#folder"/></svg>D:/</div>
        <div class="row"><i class="br"></i><svg class="big"><use href="#sail"/></svg>MSSQL</div>
        <div class="row last"><i class="br"></i><svg class="big" viewBox="0 0 20 20"><rect x="1" y="3" width="18" height="14" rx="4.500" fill="#6b96c9" stroke="#34567f" stroke-width="2"/></svg>Oracle</div>
      </div>
      <div class="vscroll"><b class="sb up"></b><b class="thumb"></b><i class="track"></i><b class="sb up"></b><b class="sb down"></b></div>
    </div>
    <i class="split first"></i>
    <div class="docktitle"><i class="hdots"></i><span>Couches</span><i class="hdots"></i><svg class="db"><use href="#float"/></svg><svg class="db"><use href="#xs"/></svg></div>
    <div class="docktools"><svg><use href="#group"/></svg><svg><use href="#eye"/></svg><svg><use href="#filter"/></svg><svg><use href="#epsf"/></svg><b class="arrow"></b><svg><use href="#expd"/></svg><svg><use href="#coll"/></svg><svg><use href="#drem"/></svg></div>
    <div class="layers"><div class="layer"><i class="lb"></i><svg class="cb"><use href="#chk"/></svg><i class="sym"></i><span>distributeurspreservatifsmasculin...</span></div></div>
    <i class="split"></i>
    <div class="docktitle"><i class="hdots"></i><span>Chemin le plus court</span><i class="hdots"></i><svg class="db"><use href="#float"/></svg><svg class="db"><use href="#xs"/></svg></div>
    <div class="route">
      <label>Départ</label>
      <div class="pick"><div class="input"></div><div class="btn dark"><svg><use href="#route"/></svg></div></div>
      <label class="second-label">Arrêt</label>
      <div class="pick p2"><div class="input"></div><div class="btn dark"><svg><use href="#route"/></svg></div></div>
      <div class="line"><span>Critère</span><div class="combo crit">Longueur</div></div>
      <div class="line"><span>Longueur</span><div class="input len"></div></div>
      <div class="line"><span>Temps</span><div class="input dur"></div></div>
      <div class="three"><div class="btn">Calculer</div><div class="btn">Exporter</div><div class="btn">Effacer</div></div>
      <div class="btn aide"><svg><use href="#buoy"/></svg>Aide</div>
    </div>
  </section>
  <i class="vsplit"></i>
  <section class="map">
    <svg class="points" viewBox="380 134 1538 859">
      <g fill="#cf70e8" stroke="#2b1a33" stroke-width="1.200">
      <circle cx="1230" cy="155" r="4.900"/><circle cx="1342" cy="166" r="4.900"/><circle cx="1664" cy="256" r="4.900"/><circle cx="1433" cy="281" r="4.900"/><circle cx="1534" cy="328" r="4.900"/><circle cx="1394" cy="379" r="4.900"/><circle cx="1667" cy="374" r="4.900"/><circle cx="1348" cy="404" r="4.900"/><circle cx="1486" cy="447" r="4.900"/><circle cx="1258" cy="302" r="4.900"/><circle cx="1537" cy="594" r="4.900"/><circle cx="1350" cy="616" r="4.900"/><circle cx="1828" cy="584" r="4.900"/><circle cx="1785" cy="603" r="4.900"/><circle cx="1815" cy="773" r="4.900"/><circle cx="1707" cy="830" r="4.900"/><circle cx="1368" cy="909" r="4.900"/><circle cx="1381" cy="948" r="4.900"/><circle cx="1303" cy="974" r="4.900"/><circle cx="1000" cy="941" r="4.900"/><circle cx="865" cy="911" r="4.900"/><circle cx="717" cy="886" r="4.900"/><circle cx="603" cy="603" r="4.900"/><circle cx="501" cy="749" r="4.900"/><circle cx="470" cy="426" r="4.900"/>
      </g>
    </svg>
  </section>
</main>

<footer class="status">
  <span class="msg">Bascule le mode d'édition de la couche courante</span>
  <span class="s-coord">Coordonnée</span><div class="input coord">2.26809,48.84136</div><div class="btn dark mouse"><svg><use href="#mouse"/></svg></div>
  <span class="s-ech">Échelle</span><div class="combo white ech">1:23 980</div>
  <span class="s-rot">Rotation</span><div class="spin rot"><span>0,0</span><i><b class="u"></b><b class="d"></b></i></div>
  <svg class="cb"><use href="#chk"/></svg><span class="s-ren">Rendu</span>
  <svg class="globe"><use href="#globe"/></svg><span class="s-epsg">EPSG:4326</span><svg class="bub"><use href="#bubble"/></svg>
</footer>

<div class="dialog">
  <div class="dtitle"><svg class="logo"><use href="#logo"/></svg><span>Enregistrer la couche vectorielle sous..</span><em>?</em><svg class="dx" viewBox="0 0 14 14"><path d="M1 1l12 12M13 1L1 13" stroke="#111" stroke-width="1.200"/></svg></div>
  <div class="form">
    <div class="frow"><span>Format</span><div class="combo grow">Keyhole Markup Language [KML]</div></div>
    <div class="frow tall"><span>Enregistrer sous</span><div class="input grow"></div><div class="btn parc">Parcourir</div></div>
    <div class="frow tall"><span>SCR</span><div class="combo grow scr">SCR sélectionné (EPSG:4326, WGS 84)</div><div class="btn dark crsb"><svg><use href="#crs"/></svg></div></div>
  </div>
  <div class="sframe">
    <div class="content">
      <div class="crow"><span>Codage</span><div class="combo w263 off">UTF-8</div></div>
      <div class="check off c1"><i></i>N'enregistrer que les entités sélectionnées</div>
      <div class="check"><i></i>Éviter la création d'attributs</div>
      <div class="check"><i><svg><use href="#chk"/></svg></i>Ajouter les fichiers sauvegardés à la carte</div>
      <div class="crow r2"><span>Exporter la symbologie</span><div class="combo w263">Pas de symbologie</div></div>
      <div class="crow r3"><span class="grey">Échelle</span><div class="spin off w263"><span>1:50000</span><i><b class="u"></b><b class="d"></b></i></div></div>
      <div class="ghead"><b class="tri"></b><strong>Géométrie</strong><i class="edge"></i></div>
      <div class="gbody geo">
        <div class="crow"><span>Type géométrique</span><div class="combo w252">Automatique</div></div>
        <div class="check off c1"><i></i>Forcer le type multiple</div>
        <div class="check off"><i></i>Inclure la dimension z</div>
      </div>
      <div class="extent"><b class="tri right"></b><i class="box"></i><strong>Etendue (courant: couche)</strong><i class="rule"></i></div>
      <div class="ghead opts"><b class="tri"></b><strong>Options de la source de données</strong><i class="edge"></i></div>
      <div class="gbody opt">
        <div class="orow"><span>AltitudeMode</span><div class="combo">clampToGround</div></div>
        <div class="orow"><span>DescriptionField</span><div class="input">Description</div></div>
        <div class="orow"><span>NameField</span><div class="input">Name</div></div>
      </div>
    </div>
    <div class="vscroll large"><b class="sb up"></b><b class="thumb"><i></i></b><i class="track"></i><b class="sb up"></b><b class="sb down"></b></div>
  </div>
  <div class="dbtns"><div class="btn off">OK</div><div class="btn">Annuler</div><div class="btn">Aide</div></div>
</div>

<svg class="notes" viewBox="0 0 1920 1029">
  <g fill="none" stroke="#ed1c24" stroke-width="5">
    <ellipse cx="987" cy="240.500" rx="320.500" ry="19.500"/><path d="M1307 240.500h84"/>
    <ellipse cx="1192" cy="279.500" rx="60" ry="16.500"/><path d="M1252 279.500h136"/>
    <ellipse cx="1002" cy="317" rx="238" ry="22.500"/><path d="M1240 317.500h149"/>
  </g>
  <g class="notetext"><text x="1394" y="249">Sélectionner le nouveau format</text><text x="1394" y="287">Cliquer pour donner un nom</text><text x="1394" y="325">Choisir le système de coordonnées</text><text x="1394" y="363">de référence</text></g>
</svg>
</body>
</html>
```
FILE: styles.css
```css
* { box-sizing: border-box; }
body {
  margin: 0; width: 1920px; height: 1029px; overflow: hidden;
  background: #f0f0f0; color: #000;
  font-family: "DejaVu Sans Condensed", "DejaVu Sans", sans-serif;
  font-stretch: condensed; font-size: 12.5px; line-height: 16px;
  display: flex; flex-direction: column; position: relative; white-space: nowrap;
}
svg { display: block; flex: none; }
i, em { font-style: normal; }
.defs { position: absolute; width: 0; height: 0; }
.ser { font-family: "Liberation Serif", serif; }

.titlebar { height: 30px; background: #fff; display: flex; align-items: center; flex: none; padding-left: 4px; }
.logo { width: 16px; height: 21px; }
.apptitle { font-family: "Open Sans", sans-serif; font-stretch: normal; font-size: 14px; color: #999; margin-left: 7px; flex: 1; }
.winbtns { width: 150px; height: 30px; margin-right: 20px; }

.menubar { height: 25px; flex: none; display: flex; align-items: center; padding: 1px 0 0 10px; border-bottom: 1px solid #bcbcbc; }

.toolbar { height: 39px; flex: none; display: flex; align-items: center; padding: 0 0 1px 5px; border-top: 1px solid #fff; border-bottom: 1px solid #b8b8b8; }
.toolbar.second { height: 39px; border-bottom: 2px solid #b8b8b8; padding-bottom: 0; }
.toolbar svg { width: 24px; height: 24px; margin: 0 5.5px; }
.toolbar svg.pressed { width: 33px; height: 33px; margin: 0 1px; padding: 3px; border: 1px solid #888; border-radius: 2px; background: #d8d8d8; }
.toolbar svg.wide { width: 29px; margin: 0 1px 0 5px; }
.toolbar svg text { font-stretch: condensed; }
.grip { width: 6px; height: 28px; flex: none; background: radial-gradient(circle at 1.5px 1.5px, #bdbdbd 1px, transparent 1.4px) 0 0/6px 6px, radial-gradient(circle at 4.5px 4.5px, #bdbdbd 1px, transparent 1.4px) 0 0/6px 6px; }
.g2 { margin-left: 8px; }
.toolbar .g2 { margin-right: -1px; }
.g3 { margin-left: 8px; }
.g4 { margin-left: 7px; margin-right: 1px; }
.g5 { margin-left: 8px; }
.arrow { width: 15px; height: 6px; flex: none; display: flex; justify-content: center; }
.arrow::before { content: ""; border: 5px solid transparent; border-top: 6px solid #000; border-bottom: 0; margin-right: 3px; }
.arrow.dim::before { border-top-color: #999; }

.workspace { height: 862px; flex: none; display: flex; }
.sidebar { width: 56px; flex: none; border-right: 2px solid #b9b9b9; display: flex; flex-direction: column; align-items: center; padding-top: 6px; }
.sidebar svg { width: 24px; height: 24px; margin: 5px 0; }
.hgrip { width: 48px; height: 6px; flex: none; background: radial-gradient(circle at 1.5px 1.5px, #bdbdbd 1px, transparent 1.4px) 0 0/6px 6px, radial-gradient(circle at 4.5px 4.5px, #bdbdbd 1px, transparent 1.4px) 0 0/6px 6px; }
.hgrip.low { margin: 7px 0 1px; }
.witharrow { display: flex; align-items: center; width: 46px; }
.witharrow svg { margin-left: 3px; }
.witharrow .arrow { margin-left: 8px; }

.docks { width: 315px; flex: none; padding-top: 3px; }
.docktitle { height: 16px; display: flex; align-items: center; }
.docktitle span { padding: 0 6px; }
.hdots { flex: 1; height: 6px; margin-left: 2px; background: radial-gradient(circle at 1.5px 1.5px, #bdbdbd 1px, transparent 1.4px) 0 0/6px 6px, radial-gradient(circle at 4.5px 4.5px, #bdbdbd 1px, transparent 1.4px) 0 0/6px 6px; }
.hdots + svg { margin-left: 3px; }
.db { width: 15px; height: 15px; border: 1px solid #777; border-radius: 2px; background: #f8f8f8; margin-left: 1px; }
.docktools { height: 36px; margin-bottom: 3px; padding-left: 7px; display: flex; align-items: center; gap: 11px; }
.docktools svg { width: 16px; height: 16px; }
.docktools .arrow { margin: 0 -5px 0 -5px; }
.tree { height: 107px; border: 2px solid #b9b9b9; border-radius: 2px; background: #fff; display: flex; overflow: hidden; }
.rows { flex: 1; overflow: hidden; background: repeating-linear-gradient(#aaa 0 1px, transparent 1px 3px) 10px 0/1px 100% no-repeat; }
.row { display: flex; align-items: center; height: 18px; padding-left: 5px; }
.row.short { height: 16px; }
.row.last { height: 15px; padding-top: 5px; line-height: 10px; }
.pm { width: 9px; height: 9px; margin-right: 10px; background: linear-gradient(#555, #555) 1px 3px/5px 1px no-repeat, linear-gradient(#555, #555) 3px 1px/1px 5px no-repeat #fff; border: 1px solid #999; position: relative; }
.pm::after { content: ""; position: absolute; left: 9px; top: 3px; width: 5px; border-top: 1px dotted #aaa; }
.br { width: 9px; margin-left: 6px; margin-right: 3px; border-top: 1px dotted #aaa; }
.fo { width: 14px; height: 16px; margin-right: 6px; }
.row svg.big { width: 20px; height: 20px; margin-right: 6px; }
.vscroll { width: 16px; flex: none; display: flex; flex-direction: column; }
.sb { height: 15.5px; flex: none; border: 1px solid #999; border-radius: 2px; background: linear-gradient(#fff, #e6e6e6); display: flex; align-items: center; justify-content: center; }
.sb::before { content: ""; border: 4px solid transparent; }
.sb.up::before { border-bottom-color: #000; border-top: 0; }
.sb.down::before { border-top-color: #000; border-bottom: 0; }
.thumb { height: 26px; flex: none; border: 1px solid #999; border-radius: 2px; background: linear-gradient(90deg, #fff, #e0e0e0); }
.track { flex: 1; background: repeating-conic-gradient(#dedede 0 25%, #fafafa 0 50%) 0 0/2px 2px; }
.split { display: block; width: 103px; height: 4px; margin: 1px 0 4px 105px; background: radial-gradient(circle at 1.5px 1.5px, #bdbdbd 1px, transparent 1.4px) 0 0/6px 4px; }
.split.first { margin-top: 2px; }
.layers { height: 197px; margin-top: 5px; border: 2px solid #b9b9b9; border-radius: 2px; background: #fff; }
.layer { height: 16px; background: #f0f0f0; display: flex; align-items: center; padding-left: 10px; }
.lb { width: 10px; height: 8px; border-left: 1px dotted #999; border-bottom: 1px dotted #999; margin-bottom: 8px; }
.cb { width: 15px; height: 15px; background: #fff; border: 1px solid #bbb; }
.layer .cb { margin-left: 3px; }
.sym { width: 11px; height: 11px; border-radius: 50%; background: #9873e8; border: 1px solid #333; margin: 0 10px 0 11px; }
.layer span { font-weight: bold; text-decoration: underline; }

.input { height: 22px; background: #fff; border: 1.5px solid #b5b5b5; border-radius: 2px; }
.btn { border: 1px solid #b0b0b0; border-radius: 2px; background: linear-gradient(#fbfbfb, #dcdcdc); display: flex; align-items: center; justify-content: center; }
.btn.dark { border-color: #8a8a8a; }
.btn.off { border-color: #8a8a8a; color: #888; }
.combo { position: relative; height: 23px; border: 1px solid #b0b0b0; border-radius: 2px; background: linear-gradient(#fbfbfb, #dcdcdc) no-repeat; display: flex; align-items: center; padding-left: 4px; }
.combo::after { content: ""; margin-left: auto; width: 16px; align-self: stretch; border-left: 1px solid #b0b0b0; }
.combo::before { content: ""; position: absolute; right: 4px; top: calc(50% - 2px); border: 4px solid transparent; border-top: 5px solid #000; border-bottom: 0; }
.combo.off { color: #888; border-color: #8a8a8a; }
.combo.off::after { border-left-color: #8a8a8a; }
.combo.off::before { border-top-color: #777; }
.combo.white { background: linear-gradient(90deg, #fff calc(100% - 16px), #ececec 0); }
.spin { height: 22px; border: 1px solid #b0b0b0; border-radius: 2px; background: #fff; display: flex; align-items: center; padding-left: 4px; }
.spin > i { margin-left: auto; width: 16px; align-self: stretch; display: flex; flex-direction: column; border-left: 1px solid #b0b0b0; background: #f4f4f4; }
.spin b { flex: 1; display: flex; align-items: center; justify-content: center; }
.spin b::before { content: ""; border: 4px solid transparent; }
.spin .u::before { border-top: 0; border-bottom-color: #000; }
.spin .d::before { border-bottom: 0; border-top-color: #000; }
.spin .d { border-top: 1px solid #b0b0b0; }
.spin.off { background: #f0f0f0; color: #888; border-color: #8a8a8a; }
.spin.off .u::before { border-bottom-color: #777; }
.spin.off .d::before { border-top-color: #777; }

.route { padding: 10px 0 0 8px; width: 307px; }
.route label { display: block; height: 20px; line-height: 20px; margin-bottom: 2px; }
.route label.second-label { margin-top: 4px; margin-bottom: 3px; }
.pick { display: flex; align-items: center; justify-content: space-between; height: 30px; }
.pick .input { width: 262px; }
.pick .btn { width: 30px; height: 29px; }
.pick svg { width: 20px; height: 20px; }
.line { display: flex; align-items: center; justify-content: space-between; height: 23px; margin-top: 6px; }
.crit { width: 148px; }
.len { width: 241px; }
.dur { width: 257px; }
.three { display: flex; justify-content: space-between; height: 28px; margin-top: 8px; }
.three .btn { width: 93px; }
.aide { height: 32px; margin-top: 9px; gap: 3px; }
.aide svg { width: 20px; height: 20px; }
.vsplit { width: 3px; flex: none; height: 282px; margin: 288px 1px 0 3px; background: radial-gradient(circle at 1.5px 1.5px, #bdbdbd 1px, transparent 1.4px) 0 0/3px 5px; }
.map { flex: 1; background: #fff; border: 2px solid #b9b9b9; border-top-width: 1px; }
.points { width: 1538px; height: 859px; }

.status { flex: 1; display: flex; align-items: center; padding: 0 0 1px 5px; }
.msg { width: 969px; }
.s-coord { width: 72px; }
.coord { width: 290px; text-align: center; line-height: 19px; }
.mouse { width: 20px; height: 29px; margin-left: 1px; }
.mouse svg { width: 16px; height: 20px; }
.s-ech { width: 53px; margin-left: 9px; }
.ech { width: 98px; }
.s-rot { width: 56px; margin-left: 9px; }
.rot { width: 107px; height: 28px; margin-right: 8px; }
.s-ren { width: 54px; margin-left: 6px; }
.globe { width: 20px; height: 20px; }
.s-epsg { width: 87px; margin-left: 4px; }
.bub { width: 20px; height: 20px; }

.dialog { position: absolute; left: 664px; top: 175px; width: 593px; height: 670px; border: 1px solid #6e6e6e; background: #f0f0f0; box-shadow: 2px 5px 16px rgba(0,0,0,.38); }
.dtitle { height: 37px; background: #fff; display: flex; align-items: center; padding-left: 11px; font-family: "Open Sans", sans-serif; font-stretch: normal; font-size: 14px; }
.dtitle span { margin-left: 7px; width: 466px; }
.dtitle .dx { width: 13px; height: 13px; margin-left: 43px; }
.dtitle em { width: 12px; }
.form { padding: 19px 20px 0; display: flex; flex-direction: column; gap: 8px; }
.frow { display: flex; align-items: center; height: 23px; }
.frow.tall { height: 29px; }
.frow > span { width: 98px; flex: none; }
.grow { flex: 1; }
.parc { width: 93px; height: 29px; margin-left: 10px; }
.scr { height: 28px; }
.crsb { width: 29px; height: 29px; margin-left: 1px; }
.crsb svg { width: 20px; height: 20px; }
.sframe { margin: 15px 0 0 11px; width: 569px; height: 450px; border: 2px solid #bababa; border-radius: 2px; display: flex; padding-left: 9px; overflow: hidden; }
.content { width: 531px; flex: none; padding-top: 9px; margin-right: 8px; }
.crow { display: flex; align-items: center; justify-content: space-between; height: 23px; }
.grey { color: #888; }
.w263 { width: 263px; }
.w252 { width: 252px; }
.check { display: flex; align-items: center; height: 16px; margin-top: 7px; }
.check.c1 { margin-top: 8px; }
.check i, .box { width: 16px; height: 16px; background: #fcfcfc; border: 1px solid #bbb; margin-right: 6px; flex: none; }
.check i svg { width: 14px; height: 14px; }
.check.off { color: #888; }
.check.off i { background: #eaeaea; border-color: #8a8a8a; }
.r2 { margin-top: 10px; }
.r3 { margin-top: 6px; height: 22px; }
.ghead { display: flex; align-items: center; height: 20px; margin-top: 9px; color: #333; }
.tri { border: 6px solid transparent; border-top: 7px solid #333; border-bottom: 0; margin: 0 7px 0 2px; flex: none; }
.tri.right { border: 6px solid transparent; border-left: 7px solid #333; border-right: 0; margin: 0 8px 0 5px; }
.edge { flex: 1; height: 11px; align-self: flex-end; border-top: 1px solid #b0b0b0; border-right: 1px solid #b0b0b0; border-radius: 0 2px 0 0; margin-left: 7px; }
.gbody { border: 1px solid #b0b0b0; border-top: 0; border-radius: 0 0 2px 2px; padding: 8px 10px 0; }
.geo { height: 93px; }
.extent { display: flex; align-items: center; height: 18px; margin-top: 10px; color: #333; }
.extent .box { margin-right: 8px; }
.rule { flex: 1; border-top: 1px solid #888; margin-left: 7px; }
.opts { margin-top: 15px; }
.opt { height: 98px; }
.orow { display: flex; align-items: center; height: 23px; margin-bottom: 6px; }
.orow > span { width: 90px; display: flex; justify-content: flex-end; margin-right: 5px; flex: none; }
.orow > div { flex: 1; }
.orow .input { padding-left: 4px; line-height: 19px; }
.vscroll.large .thumb { height: 364px; display: flex; align-items: center; justify-content: center; }
.vscroll.large .thumb i { width: 11px; height: 19px; background: radial-gradient(circle at 1.5px 1.5px, #b5b5b5 1px, transparent 1.3px) 0 0/4px 4px; }
.dbtns { display: flex; justify-content: flex-end; gap: 10px; padding: 11px 11px 0; }
.dbtns .btn { width: 93px; height: 28px; }

.notes { position: absolute; left: 0; top: 0; width: 1920px; height: 1029px; pointer-events: none; }
.notetext { font-family: "Liberation Sans", Arial, sans-serif; font-stretch: normal; font-size: 31.9px; fill: #ed1c24; }
```
